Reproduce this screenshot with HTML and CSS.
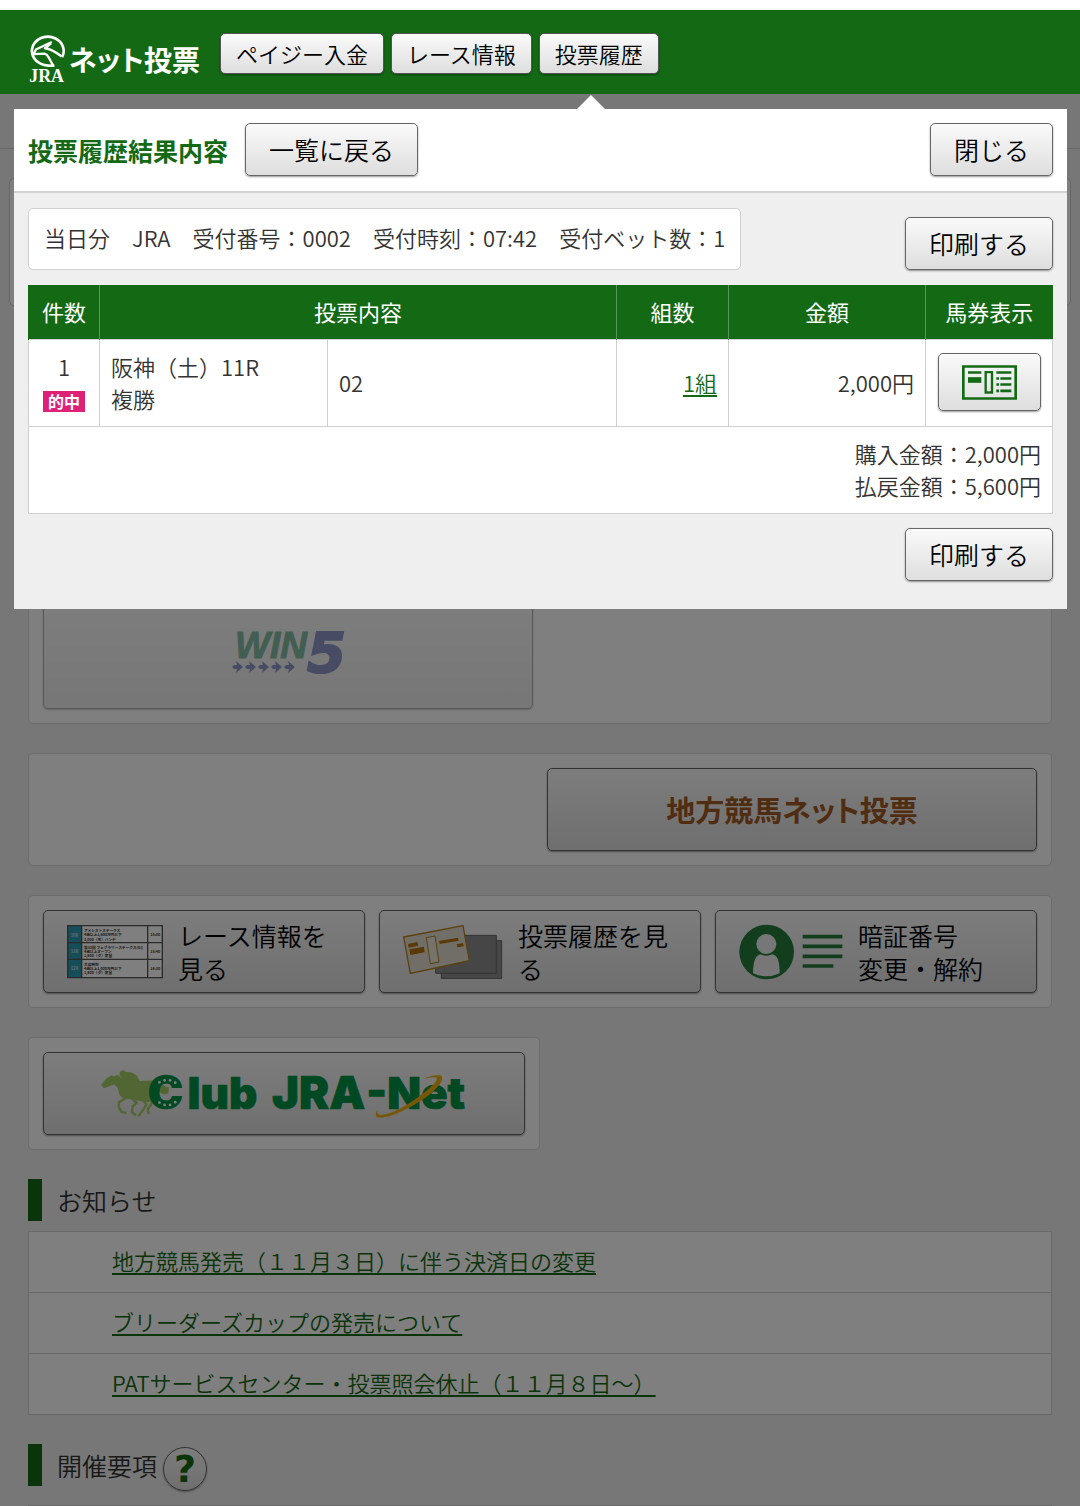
FILE: index.html
```html
<!DOCTYPE html>
<html lang="ja">
<head>
    <meta charset="UTF-8">
    <meta name="viewport" content="width=device-width, initial-scale=1">
    <title>JRAネット投票</title>
    <link rel="stylesheet" href="styles.css">
</head>
<body>
    <header class="header">
        <a class="logo" href="#">
            <svg class="logo-mark" viewBox="88 84 118 187" width="39" height="62" aria-hidden="true">
                <g fill="none" stroke="#fff" stroke-linejoin="round">
                    <path stroke-width="8" d="M191 172A48 43 0 1 0 120 188Q134 199 168 198"/>
                    <path stroke-width="7" d="M160 126L112 149L105 163L138 161Q146 163 150 172L164 197"/>
                    <path stroke-width="7" d="M158 130L139 145Q160 147 190 170"/>
                </g>
                <text x="92" y="246" font-family="Liberation Serif, serif" font-weight="bold" font-size="54" fill="#fff">JRA</text>
            </svg>
            <span class="logo-text">ネット投票</span>
        </a>
        <nav class="header-nav">
            <button type="button" class="btn btn-small">ペイジー入金</button>
            <button type="button" class="btn btn-small">レース情報</button>
            <button type="button" class="btn btn-small">投票履歴</button>
        </nav>
    </header>

    <main class="main">
        <div class="toolbar"></div>
        <div class="welcome"></div>

        <div class="content">
            <div class="panel panel-vote">
                <button type="button" class="btn btn-win5" disabled>
                    <svg viewBox="-4 -16 124 76" width="124" height="76" role="img" aria-label="WIN5">
                        <text x="5" y="27" font-family="Liberation Sans, sans-serif" font-weight="bold" font-style="italic" font-size="37" fill="#0b7c4c" stroke="#0b7c4c">WIN</text>
                        <text x="77" y="41" font-family="DejaVu Sans, sans-serif" font-weight="bold" font-style="italic" font-size="56" fill="#1f2f90" stroke="#1f2f90" stroke-width="2">5</text>
                        <g fill="#1f2f90">
                            <path id="arrow" d="M2 36L4 34L7 34L6 30L13 36L6 42L7 38L4 38Z"/>
                            <use href="#arrow" x="13"/>
                            <use href="#arrow" x="26"/>
                            <use href="#arrow" x="39"/>
                            <use href="#arrow" x="52"/>
                        </g>
                    </svg>
                </button>
            </div>

            <div class="panel panel-local">
                <button type="button" class="btn btn-menu btn-local">地方競馬ネット投票</button>
            </div>

            <div class="panel panel-menu">
                <button type="button" class="btn btn-menu">
                    <svg viewBox="0 0 288 162" width="96" height="54" aria-hidden="true">
                        <path fill="#fff" d="M2 2H286V158H2Z"/>
                        <path fill="#2b9db0" d="M2 2H44V158H2Z"/>
                        <path fill="none" stroke="#555" stroke-width="4" d="M2 2H286V158H2ZM2 53H286M2 103H286M44 2V158M242 2V158"/>
                        <g font-family="Noto Sans CJK JP, sans-serif" font-weight="bold" font-size="11" fill="#333">
                            <text x="51" y="22">アメシストステークス</text>
                            <text x="51" y="34">4歳以上1,600万円以下</text>
                            <text x="51" y="47">2,000（芝）ハンデ</text>
                            <text x="51" y="72">第32回 フェブラリーステークス(GI)</text>
                            <text x="51" y="84">4歳以上オープン</text>
                            <text x="51" y="97">1,600（ダ）定量</text>
                            <text x="51" y="122">大島特別</text>
                            <text x="51" y="134">4歳以上1,000万円以下</text>
                            <text x="51" y="147">1,800（ダ）定量</text>
                            <text x="250" y="34">15:00</text>
                            <text x="250" y="84">15:40</text>
                            <text x="250" y="134">16:30</text>
                        </g>
                        <g font-family="Noto Sans CJK JP, sans-serif" font-size="13" fill="#fff">
                            <text x="11" y="35">10R</text>
                            <text x="11" y="85">11R</text>
                            <text x="11" y="135">12R</text>
                        </g>
                    </svg>
                    <span class="menu-label">レース情報を見る</span>
                </button>
                <button type="button" class="btn btn-menu">
                    <svg viewBox="0 0 300 162" width="100" height="54" aria-hidden="true">
                        <path fill="#8c8c8c" stroke="#666" stroke-width="3" d="M115 47H296V161H115Z"/>
                        <path fill="#8c8c8c" stroke="#666" stroke-width="3" d="M98 31H280V145H98Z"/>
                        <path fill="#e0dccd" stroke="#b8801a" stroke-width="4" d="M2 36L180 2L199 107L22 145Z"/>
                        <path fill="#eae6d8" stroke="#b8801a" stroke-width="3" d="M70 38L96 33L108 111L82 116Z"/>
                        <path fill="#b87305" d="M15 57L43 51L46 62L17 68ZM19 73L63 65L65 82L22 90ZM108 48L165 38L167 47L110 57ZM161 58L180 54L182 64L163 67Z"/>
                    </svg>
                    <span class="menu-label">投票履歴を見る</span>
                </button>
                <button type="button" class="btn btn-menu">
                    <svg viewBox="0 0 312 168" width="104" height="56" aria-hidden="true">
                        <circle cx="83" cy="84" r="82" fill="#267c3b"/>
                        <circle cx="82" cy="60" r="30" fill="#eee"/>
                        <path fill="#eee" d="M42 148C43 115 48 94 65 91Q82 99 100 91C117 94 122 115 122 148Q82 166 42 148Z"/>
                        <path stroke="#267c3b" stroke-width="11" d="M191 38H310M191 67H310M191 97H310M191 126H283"/>
                    </svg>
                    <span class="menu-label">暗証番号<br>変更・解約</span>
                </button>
            </div>

            <div class="panel panel-club">
                <button type="button" class="btn btn-menu btn-club">
                    <svg viewBox="230 90 1070 204" width="368" height="70" role="img" aria-label="Club JRA-Net">
                        <g fill="#a4cc66">
                            <path d="M232 166L246 148L262 137L270 140L280 136L292 146L286 138L286 128L296 122L305 128L322 129L336 138L344 154L382 153L400 158L420 170L430 172L428 190L415 194L402 186L395 205L368 216L340 212L318 207L296 206L286 196L280 172L268 164L254 170L240 175Z"/>
                            <path fill="none" stroke="#a4cc66" stroke-width="7" d="M306 203L284 216L284 232L292 244L306 247M320 204L336 218L324 228L322 246L334 254M352 208L364 222L352 242L340 257M380 206L378 222L368 236L370 250"/>
                        </g>
                        <g font-family="Inter, sans-serif" font-weight="900" font-size="128" fill="#009245" stroke="#009245" stroke-width="2">
                            <text x="368" y="235" font-size="138">C</text>
                            <text x="484" y="235">lub</text>
                            <text x="730" y="235" font-size="132">JRA</text>
                            <text x="1005" y="235">-Net</text>
                        </g>
                        <g fill="#fff">
                            <circle cx="402" cy="158" r="4"/>
                            <circle cx="417" cy="152" r="4"/>
                            <circle cx="433" cy="152" r="4"/>
                            <circle cx="448" cy="159" r="4"/>
                            <circle cx="402" cy="217" r="4"/>
                            <circle cx="417" cy="224" r="4"/>
                            <circle cx="433" cy="224" r="4"/>
                            <circle cx="448" cy="216" r="4"/>
                        </g>
                        <path fill="#efae0c" d="M1172 148Q1200 134 1222 138C1238 148 1206 186 1160 214C1110 246 1060 266 1036 260Q1028 252 1038 238Q1034 254 1048 253C1080 252 1130 222 1168 192C1200 168 1218 148 1208 144Q1196 142 1172 148Z"/>
                    </svg>
                </button>
            </div>

            <h2 class="section-title">お知らせ</h2>
            <ul class="news">
                <li><a href="#">地方競馬発売（１１月３日）に伴う決済日の変更</a></li>
                <li><a href="#">ブリーダーズカップの発売について</a></li>
                <li><a href="#">PATサービスセンター・投票照会休止（１１月８日～）</a></li>
            </ul>

            <div class="section-row">
                <h2 class="section-title">開催要項</h2>
                <button type="button" class="btn btn-help">?</button>
            </div>
            <div class="guide"></div>
        </div>

        <div class="overlay"></div>

        <!-- 投票履歴のポップアップ -->
        <section class="modal">
            <div class="modal-head">
                <h1>投票履歴結果内容</h1>
                <button type="button" class="btn">一覧に戻る</button>
                <button type="button" class="btn btn-close">閉じる</button>
            </div>
            <div class="modal-body">
                <div class="info-row">
                    <p class="info">当日分　JRA　受付番号：0002　受付時刻：07:42　受付ベット数：1</p>
                    <button type="button" class="btn">印刷する</button>
                </div>
                <table class="result">
                    <colgroup>
                        <col class="col-no">
                        <col class="col-race">
                        <col>
                        <col class="col-sets">
                        <col class="col-amount">
                        <col class="col-ticket">
                    </colgroup>
                    <thead>
                        <tr>
                            <th>件数</th>
                            <th colspan="2">投票内容</th>
                            <th>組数</th>
                            <th>金額</th>
                            <th>馬券表示</th>
                        </tr>
                    </thead>
                    <tbody>
                        <tr>
                            <td class="center">1<br><span class="badge">的中</span></td>
                            <td>阪神（土）11R<br>複勝</td>
                            <td>02</td>
                            <td class="right"><a href="#">1組</a></td>
                            <td class="right">2,000円</td>
                            <td class="center">
                                <button type="button" class="btn btn-ticket" aria-label="馬券表示">
                                    <svg viewBox="0 0 165 104" width="55" height="35" aria-hidden="true">
                                        <g fill="none" stroke="#146914">
                                            <path stroke-width="8" d="M4 4H161V100H4Z"/>
                                            <path stroke-width="7" d="M71 21H90V82H71Z"/>
                                            <path stroke-width="8" d="M18 22H58M103 22H148M103 40H111M115 40H148M103 58H111M115 58H148M103 77H111M115 77H148"/>
                                        </g>
                                        <path fill="#146914" d="M18 36H58V53H18Z"/>
                                    </svg>
                                </button>
                            </td>
                        </tr>
                    </tbody>
                    <tfoot>
                        <tr>
                            <td colspan="6" class="right">購入金額：2,000円<br>払戻金額：5,600円</td>
                        </tr>
                    </tfoot>
                </table>
                <div class="print-row">
                    <button type="button" class="btn">印刷する</button>
                </div>
            </div>
        </section>
    </main>
</body>
</html>
```
FILE: styles.css
```css
* {
    box-sizing: border-box;
}

body {
    margin: 0;
    border-top: 10px solid #fff;
    background-color: #efefef;
    color: #333;
    font-family: "Noto Sans CJK JP", sans-serif;
    font-size: 22px;
    font-weight: 350;
    line-height: 32px;
}

h1,
h2,
p,
ul {
    margin: 0;
    padding: 0;
}

a {
    color: #146914;
    text-underline-offset: 3px;
}

/* ボタン共通 */
.btn {
    height: 53px;
    padding: 0 23px;
    border: 1px solid #666;
    border-radius: 5px;
    background: linear-gradient(#fafafa, #dedede);
    box-shadow: 0 1px 2px rgba(0, 0, 0, 0.4);
    color: #000;
    font-family: inherit;
    font-size: 25px;
    font-weight: 350;
    line-height: 33px;
    white-space: nowrap;
    cursor: pointer;
}

.btn svg {
    display: block;
    flex-shrink: 0;
}

/* ヘッダー */
.header {
    display: flex;
    align-items: center;
    height: 84px;
    padding: 0 28px;
    background-color: #146914;
}

.logo {
    display: flex;
    align-items: center;
    gap: 2px;
    padding-top: 14px;
    color: #fff;
    text-decoration: none;
}

.logo-text {
    font-size: 28px;
    font-weight: bold;
    font-feature-settings: "palt";
}

.header-nav {
    display: flex;
    gap: 7px;
    margin-left: 20px;
    padding-top: 3px;
}

.btn-small {
    height: 41px;
    padding: 0 15px;
    border-color: #555;
    font-size: 22px;
}

/* メイン */
.main {
    position: relative;
}

.toolbar {
    height: 55px;
    border-bottom: 1px solid #ccc;
}

.welcome {
    height: 128px;
    margin: 29px 9px;
    border: 1px solid #ccc;
    border-radius: 5px;
    background-color: #fff;
}

.content {
    padding: 0 28px;
}

.panel {
    display: grid;
    gap: 14px;
    margin-bottom: 29px;
    padding: 14px;
    border: 1px solid #d8d8d8;
    border-radius: 5px;
    background-color: #fff;
}

.panel-vote {
    grid-template-columns: 1fr 1fr;
    align-items: end;
    min-height: 389px;
}

.panel-local {
    grid-template-columns: 1fr 1fr;
}

.panel-menu {
    grid-template-columns: 1fr 1fr 1fr;
}

.panel-club {
    width: 50%;
}

.btn-win5 {
    display: flex;
    align-items: center;
    justify-content: center;
    height: 113px;
    opacity: 0.5;
}

.btn-menu {
    display: flex;
    align-items: center;
    justify-content: center;
    gap: 15px;
    height: 83px;
    padding: 0 15px 0 23px;
    white-space: normal;
}

.btn-local {
    grid-column: 2;
    padding: 0;
    color: #a05a24;
    font-size: 29px;
    font-weight: bold;
    font-feature-settings: "palt";
}

.btn-club {
    padding: 0;
}

.menu-label {
    flex: 1;
    text-align: left;
}

.section-title {
    height: 42px;
    margin-bottom: 10px;
    padding-left: 15px;
    border-left: 14px solid #146914;
    font-size: 25px;
    font-weight: 350;
    line-height: 42px;
}

.section-row {
    display: flex;
    align-items: flex-start;
    gap: 6px;
    margin: 29px 0 14px;
}

.section-row .section-title {
    margin-bottom: 0;
}

.news {
    border: 1px solid #d0d0d0;
    background-color: #fff;
    list-style: none;
}

.news li {
    padding: 12px 14px 16px 83px;
}

.news li + li {
    border-top: 1px solid #d0d0d0;
}

.btn-help {
    width: 44px;
    height: 44px;
    margin-top: 3px;
    padding: 0;
    border-radius: 50%;
    color: #146914;
    font-family: "DejaVu Sans", sans-serif;
    font-size: 38px;
    font-weight: bold;
}

.guide {
    border-top: 1px solid #d0d0d0;
}

.overlay {
    position: absolute;
    inset: 0;
    background-color: rgba(0, 0, 0, 0.5);
}

/* ポップアップ */
.modal {
    position: absolute;
    top: 15px;
    left: 14px;
    right: 13px;
    background-color: #efefef;
}

.modal::before {
    content: "";
    position: absolute;
    bottom: 100%;
    left: 563px;
    border: 14px solid transparent;
    border-top: 0;
    border-bottom-color: #fff;
}

.modal-head {
    display: flex;
    align-items: center;
    gap: 17px;
    padding: 14px 14px 15px;
    border-bottom: 2px solid #d3d3d3;
    background-color: #fff;
}

.modal-head h1 {
    color: #146914;
    font-size: 25px;
    font-weight: bold;
}

.btn-close {
    margin-left: auto;
}

.modal-body {
    padding: 15px 14px 28px;
}

.info-row {
    display: flex;
    align-items: flex-end;
    justify-content: space-between;
    margin-bottom: 15px;
}

.info {
    padding: 12px 15px 16px;
    border: 1px solid #d0d0d0;
    border-radius: 5px;
    background-color: #fff;
}

.result {
    width: 100%;
    border-collapse: collapse;
    table-layout: fixed;
    background-color: #fff;
}

.col-no {
    width: 71px;
}

.col-race {
    width: 228px;
}

.col-sets {
    width: 112px;
}

.col-amount {
    width: 197px;
}

.col-ticket {
    width: 127px;
}

.result th {
    padding: 10px 0 12px;
    border-left: 1px solid #5a965a;
    background-color: #146914;
    color: #fff;
    font-weight: normal;
}

.result th:first-child {
    border-left-color: #146914;
}

.result td {
    padding: 10px 11px 12px;
    border: 1px solid #d0d0d0;
}

.result .center {
    padding: 10px 0 12px;
    text-align: center;
}

.result .right {
    text-align: right;
}

.badge {
    display: inline-block;
    padding: 0 5px;
    background-color: #de2177;
    color: #fff;
    font-size: 16px;
    font-weight: bold;
    line-height: 21px;
}

.btn-ticket {
    height: 58px;
    vertical-align: middle;
}

.print-row {
    margin-top: 14px;
}

.print-row .btn {
    display: block;
    margin-left: auto;
}
```
